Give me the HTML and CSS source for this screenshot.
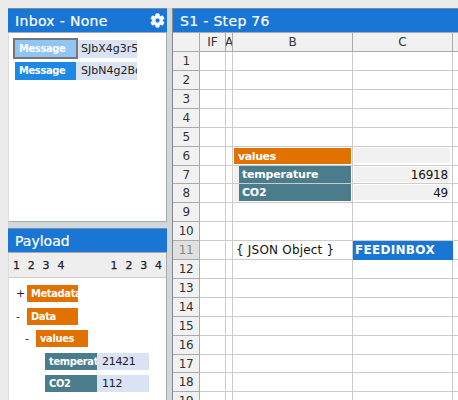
FILE: index.html
```html
<!DOCTYPE html>
<html lang="en">
<head>
<meta charset="utf-8">
<title>Inbox</title>
<link rel="stylesheet" href="styles.css">
</head>
<body>
<div class="app">
  <aside class="side">
    <section class="inbox">
      <header class="bar"><h2>Inbox - None</h2>
        <svg class="gear" viewBox="0 0 24 24"><path fill="#fff" stroke="#fff" stroke-width=".8" d="M19.140 12.940c.04-.3.06-.61.06-.94 0-.32-.02-.64-.07-.94l2.030-1.580c.18-.14.23-.41.12-.61l-1.920-3.320c-.12-.22-.37-.29-.59-.22l-2.390.96c-.5-.38-1.030-.7-1.620-.94l-.36-2.540c-.04-.24-.24-.41-.48-.41h-3.840c-.24 0-.43.17-.47.41l-.36 2.540c-.59.24-1.130.57-1.620.94l-2.390-.96c-.22-.08-.47 0-.59.22L2.740 8.870c-.12.21-.08.47.12.61l2.030 1.580c-.05.3-.09.63-.09.94s.02.64.07.94l-2.030 1.580c-.18.14-.23.41-.12.61l1.920 3.320c.12.22.37.29.59.22l2.390-.96c.5.38 1.030.7 1.620.94l.36 2.540c.05.24.24.41.48.41h3.840c.24 0 .44-.17.47-.41l.36-2.540c.59-.24 1.130-.56 1.620-.94l2.390.96c.22.08.47 0 .59-.22l1.920-3.320c.12-.22.07-.47-.12-.61l-2.010-1.580zM12 15.400a3.400 3.400 0 1 1 0-6.800 3.400 3.400 0 0 1 0 6.800z"/></svg>
      </header>
      <div class="messages">
        <div class="message selected"><b>Message</b><span>SJbX4g3r5</span></div>
        <div class="message"><b>Message</b><span>SJbN4g2Bq</span></div>
      </div>
    </section>
    <section class="payload">
      <header class="bar"><h2>Payload</h2></header>
      <div class="levels"><div><i>1</i><i>2</i><i>3</i><i>4</i></div><div><i>1</i><i>2</i><i>3</i><i>4</i></div></div>
      <div class="tree">
        <div class="node"><em>+</em><b class="group">Metadata</b></div>
        <div class="node"><em>-</em><b class="group">Data</b></div>
        <div class="node l2"><em>-</em><b class="group">values</b></div>
        <div class="node l3"><b class="leaf">temperat</b><span>21421</span></div>
        <div class="node l3"><b class="leaf">CO2</b><span>112</span></div>
      </div>
    </section>
  </aside>
  <main class="sheet">
    <header class="bar"><h2>S1 - Step 76</h2></header>
    <div class="row head"><div></div><div>IF</div><div class="narrow">A</div><div>B</div><div>C</div><div></div></div>
    <div class="row"><div>1</div><div></div><div></div><div></div><div></div><div></div></div>
    <div class="row"><div>2</div><div></div><div></div><div></div><div></div><div></div></div>
    <div class="row"><div>3</div><div></div><div></div><div></div><div></div><div></div></div>
    <div class="row"><div>4</div><div></div><div></div><div></div><div></div><div></div></div>
    <div class="row"><div>5</div><div></div><div></div><div></div><div></div><div></div></div>
    <div class="row"><div>6</div><div></div><div></div><div><b class="tag group">values</b></div><div><span class="num"></span></div><div></div></div>
    <div class="row short"><div>7</div><div></div><div></div><div><b class="tag leaf">temperature</b></div><div><span class="num">16918</span></div><div></div></div>
    <div class="row"><div>8</div><div></div><div></div><div><b class="tag leaf">CO2</b></div><div><span class="num">49</span></div><div></div></div>
    <div class="row"><div>9</div><div></div><div></div><div></div><div></div><div></div></div>
    <div class="row"><div>10</div><div></div><div></div><div></div><div></div><div></div></div>
    <div class="row active"><div>11</div><div></div><div></div><div class="object">{ JSON Object }</div><div class="feed">FEEDINBOX</div><div></div></div>
    <div class="row"><div>12</div><div></div><div></div><div></div><div></div><div></div></div>
    <div class="row"><div>13</div><div></div><div></div><div></div><div></div><div></div></div>
    <div class="row"><div>14</div><div></div><div></div><div></div><div></div><div></div></div>
    <div class="row"><div>15</div><div></div><div></div><div></div><div></div><div></div></div>
    <div class="row"><div>16</div><div></div><div></div><div></div><div></div><div></div></div>
    <div class="row short"><div>17</div><div></div><div></div><div></div><div></div><div></div></div>
    <div class="row"><div>18</div><div></div><div></div><div></div><div></div><div></div></div>
    <div class="row"><div>19</div><div></div><div></div><div></div><div></div><div></div></div>
  </main>
</div>
</body>
</html>
```
FILE: styles.css
```css
* { box-sizing: border-box; }
body {
  margin: 0;
  height: 400px;
  overflow: hidden;
  background: #ececec;
  color: #222;
  font: 11px/17px "DejaVu Sans", sans-serif;
}
.app {
  display: grid;
  grid-template-columns: 164px 1fr;
  height: 400px;
  padding: 8px 0 0 8px;
  overflow: hidden;
}
.side {
  display: flex;
  flex-direction: column;
  gap: 6px;
  width: 164px;
  padding-right: 5px;
  background: #cfd8dc;
}
.bar {
  display: flex;
  justify-content: space-between;
  align-items: center;
  height: 25px;
  padding: 0 7px;
  background: #1976d5;
  color: #fff;
  border-top: 1px solid #6f8ba5;
  border-bottom: 1px solid #aaa;
}
.side .bar { margin-left: -1px; width: 159px; }
.inbox .bar { padding-right: 1px; }
h2 {
  margin: 0;
  font: 14px/22px "DejaVu Sans", sans-serif;
  letter-spacing: .33px;
  -webkit-text-stroke: .2px #fff;
}
.payload h2 { letter-spacing: 0; }
.gear { width: 17px; height: 17px; }
.inbox, .payload {
  border-left: 1px solid #ddd;
  border-right: 1px solid #aaa;
  background: #fff;
}
.inbox { height: 214px; border-bottom: 1px solid #aaa; }
.payload { flex: 1; }
.messages { padding: 7px 0 0 6px; }
.message { display: flex; height: 18px; margin-bottom: 4px; line-height: 17px; }
.side b {
  color: #fff;
  font-family: "DejaVu Sans Condensed", sans-serif;
  letter-spacing: -.35px;
}
.message b { width: 61px; padding-left: 4px; background: #1e88e5; }
.message.selected b {
  position: relative;
  height: 17px;
  background: #90c5f4;
  outline: 2px solid #777;
}
.message span {
  width: 61px;
  padding-left: 5px;
  overflow: hidden;
  white-space: nowrap;
  background: #dae3f3;
}
.levels {
  display: flex;
  justify-content: space-between;
  height: 25px;
  padding: 0 4px 0 4px;
  background: #eee;
  border-bottom: 1px solid #ccc;
  line-height: 25px;
  -webkit-text-stroke: .25px #222;
}
.levels div { display: flex; gap: 7.800px; }
.levels i { font-style: normal; }
.tree { padding: 7px 0 0 6px; }
.node { display: flex; height: 17px; margin-bottom: 5.600px; }
.node em { width: 12px; padding-left: 1px; font-style: normal; }
.node b { width: 51px; padding-left: 4px; overflow: hidden; }
.node span { width: 52px; padding-left: 5px; background: #dae3f3; letter-spacing: -.3px; }
.l2 { margin-left: 9px; }
.l2 b { width: 52px; }
.l3 { margin-left: 30px; }
.l3 b { width: 52px; }
.group { background: #e17100; }
.leaf { background: #4b7c8b; }
.sheet {
  height: 392px;
  overflow: hidden;
  border-left: 1px solid #888;
  background: #fff;
}
.row {
  display: grid;
  grid-template-columns: 27px 26px 7px 120px 100px 5px;
  height: 19px;
}
.short { height: 18px; }
.row > div {
  overflow: hidden;
  border-right: 1px solid #ccc;
  border-bottom: 1px solid #ccc;
  white-space: nowrap;
}
.row > div:first-child, .head > div {
  padding-top: 1px;
  background: #f1f1f1;
  border-color: #aaa;
  color: #333;
  font-size: 12px;
  letter-spacing: -.4px;
  text-align: center;
}
.row.head > div { letter-spacing: 0; }
.head > .narrow { display: flex; justify-content: center; }
.row > div:last-child { border-right: 0; }
.row.active > div:first-child { background: #e0e0e0; color: #888; }
.tag {
  display: block;
  height: 16px;
  margin: 1px;
  padding-left: 4px;
  color: #fff;
  line-height: 17px;
  letter-spacing: -.2px;
}
.tag.group { letter-spacing: -.4px; }
.tag.leaf { height: 17px; margin: 0 1px 0 6px; padding-left: 3px; box-shadow: -5px 0 #f1f1f1; line-height: 18px; }
.num {
  display: block;
  height: 15px;
  margin: 1px 2px 1px 1px;
  padding-right: 2px;
  background: #f1f1f1;
  color: #111;
  font-size: 12px;
  letter-spacing: -.2px;
  text-align: right;
}
.row > .object { padding-left: 3px; color: #111; font-size: 12px; letter-spacing: .2px; line-height: 19px; }
.row > .feed {
  padding-left: 2px;
  background: #1976d5;
  border-color: #1976d5;
  color: #fff;
  font-size: 12px;
  font-weight: bold;
  letter-spacing: .3px;
  line-height: 19px;
}
```
